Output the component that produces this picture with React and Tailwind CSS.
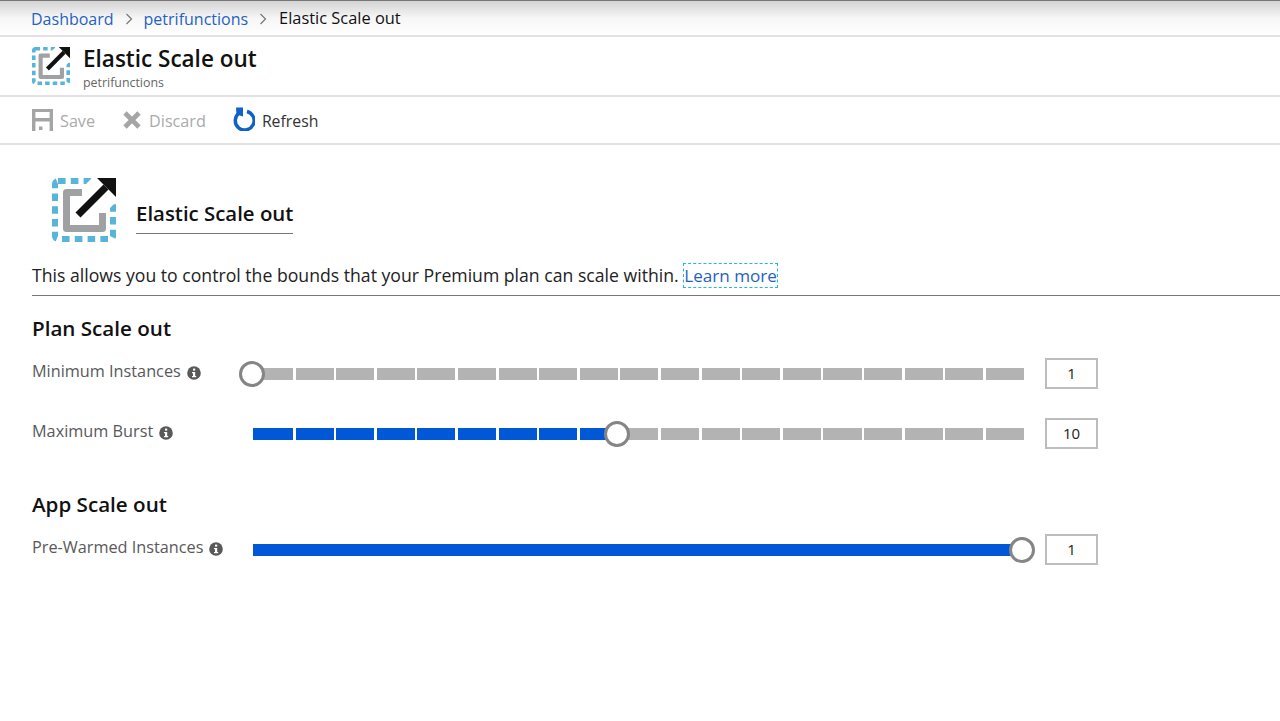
const font = { fontFamily: '"Open Sans", "Noto Sans", sans-serif' }

const ElasticIcon = ({ className }) => (
  <svg className={className} viewBox="0 0 64 64" fill="none">
    <rect x="3" y="3" width="58" height="58" rx="3" stroke="#59b4d9" strokeWidth="6" strokeDasharray="7.6 5.2" />
    <path d="M30 14.5H14.5V50.5H50.5V35" stroke="#a0a1a2" strokeWidth="7" strokeLinejoin="round" />
    <path d="M42 -2H66V22L56 32L32 8Z" fill="white" />
    <path d="M45 0H64V19Z" fill="#111" />
    <path d="M26 37L54 9" stroke="#111" strokeWidth="7" />
  </svg>
)

const InfoIcon = () => (
  <svg className="w-[14px] h-[14px] shrink-0 mt-[3px]" viewBox="0 0 14 14">
    <circle cx="7" cy="7" r="6.8" fill="#595959" />
    <rect x="6" y="2.6" width="2.2" height="2" fill="white" />
    <path d="M5 6h3.2v4h1v1.3H5V10h1V7.3H5Z" fill="white" />
  </svg>
)

const Chevron = () => (
  <svg className="w-[8px] h-[12px] mx-[11px]" viewBox="0 0 8 12" fill="none">
    <path d="M1.5 1L6.5 6L1.5 11" stroke="#777" strokeWidth="1.2" />
  </svg>
)

const Slider = ({ label, value, blue, thumb, solid }) => (
  <div className="flex items-center h-[31px]">
    <div className="w-[221px] shrink-0 flex items-center gap-[6px] text-[16.25px] text-[#595959] pb-[5px]">
      <span>{label}</span>
      <InfoIcon />
    </div>
    <div className="relative w-[771px] h-[12px] shrink-0 flex gap-[2.5px]">
      {solid ? (
        <div className="flex-1 bg-[#0058d6]" />
      ) : (
        Array.from({ length: 19 }).map((_, i) => (
          <div key={i} className={`${i === 0 ? 'w-[40px]' : 'flex-1'} ${i < blue ? 'bg-[#0058d6]' : 'bg-[#b3b3b3]'}`} />
        ))
      )}
      <div
        className="absolute top-[-7px] w-[26px] h-[26px] rounded-full bg-white border-[3px] border-[#858585]"
        style={{ left: thumb }}
      />
    </div>
    <div className="ml-[21px] w-[53px] h-[31px] border-2 border-[#bdbdbd] flex items-center justify-center text-[15px] text-[#222]">
      {value}
    </div>
  </div>
)

export default function App() {
  return (
    <div className="w-[1280px] h-[721px] bg-white overflow-hidden text-[#111]" style={font}>
      <div className="h-[37px] flex items-center pl-[31px] pt-[1px] text-[16px] border-b-2 border-[#e2e2e2] border-t border-t-[#777] bg-linear-to-b from-[#d4d4d4] via-[#f6f6f6] to-white">
        <span className="text-[#1f62c4]">Dashboard</span>
        <Chevron />
        <span className="text-[#1f62c4]">petrifunctions</span>
        <Chevron />
        <span className="text-[16.4px] ml-[1px]">Elastic Scale out</span>
      </div>

      <div className="h-[60px] flex items-center pl-[32px] gap-[13px] border-b-2 border-[#e2e2e2]">
        <ElasticIcon className="w-[38px] h-[38px]" />
        <div className="flex flex-col pt-[3px]">
          <span className="text-[22.5px] leading-[27px] font-semibold">Elastic Scale out</span>
          <span className="text-[12.4px] leading-[17px] mt-[2px] text-[#666]">petrifunctions</span>
        </div>
      </div>

      <div className="h-[48px] flex items-center pl-[32px] pt-[2px] text-[16.2px] border-b-2 border-[#e2e2e2]">
        <svg className="w-[21px] h-[22px] mr-[7px] -mt-[3px]" viewBox="0 0 21 22">
          <path d="M0 0H21V22H0ZM3.4 3V9H17.6V3ZM3.4 12.5V22H17.6V12.5Z" fill="#a5a5a5" fillRule="evenodd" />
          <path d="M7 17.5H10.5V21H7Z" fill="#a5a5a5" />
        </svg>
        <span className="text-[#aaa]">Save</span>
        <svg className="w-[20px] h-[20px] ml-[27px] mr-[7px] -mt-[3px]" viewBox="0 0 20 20" fill="none">
          <path d="M3 3L17 17M17 3L3 17" stroke="#a5a5a5" strokeWidth="4.6" />
        </svg>
        <span className="text-[#aaa]">Discard</span>
        <svg className="w-[22px] h-[24px] ml-[27px] mr-[7px] -mt-[5px]" viewBox="0 0 22 24" fill="none">
          <path d="M5.5 6.5A9.4 9.4 0 1 0 14 4.5" stroke="#0f62c9" strokeWidth="3.4" />
          <path d="M3 0.5H10V9.5L3.5 7.5Z" fill="#0f62c9" />
        </svg>
        <span className="text-[#333] text-[15.8px] mt-[1px]">Refresh</span>
      </div>

      <div className="flex items-center pl-[52px] pt-[33px] gap-[20px]">
        <ElasticIcon className="w-[64px] h-[64px]" />
        <div className="text-[20.4px] leading-[30px] font-semibold pb-[5px] mt-[11px] border-b border-[#777]">
          Elastic Scale out
        </div>
      </div>

      <div className="mt-[21px] ml-[32px] pb-[7px] text-[17.65px] leading-[24px] border-b border-[#777] text-[#222]">
        This allows you to control the bounds that your Premium plan can scale within.{' '}
        <span className="text-[#1f62c4] text-[17.1px] border-[1.5px] border-dashed border-[#20b8e8]">Learn more</span>
      </div>

      <div className="pl-[32px]">
        <h2 className="mt-[18px] text-[20.6px] leading-[28px] font-semibold">Plan Scale out</h2>
        <div className="mt-[16px] flex flex-col gap-[29px]">
          <Slider label="Minimum Instances" value="1" blue={0} thumb="-14px" />
          <Slider label="Maximum Burst" value="10" blue={9} thumb="351px" />
        </div>
        <h2 className="mt-[41px] text-[20.6px] leading-[28px] font-semibold">App Scale out</h2>
        <div className="mt-[16px]">
          <Slider label="Pre-Warmed Instances" value="1" solid thumb="756px" />
        </div>
      </div>
    </div>
  )
}
